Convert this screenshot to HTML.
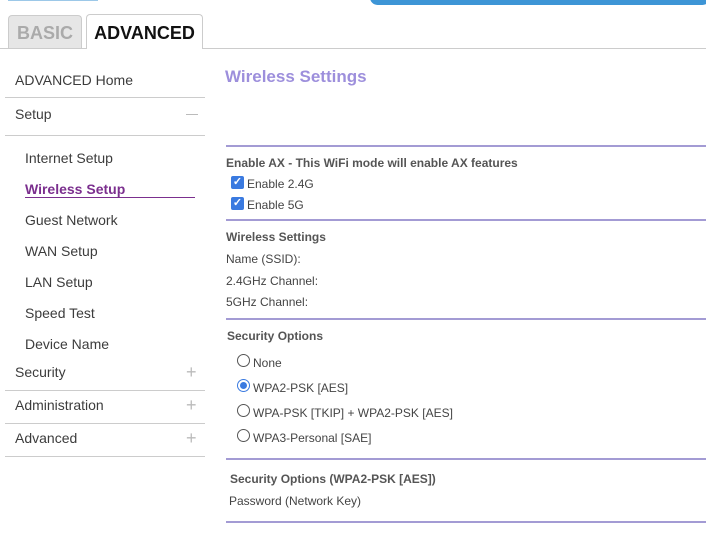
<!DOCTYPE html><html><head><style>
*{margin:0;padding:0;box-sizing:border-box}
body{width:706px;height:544px;background:#fff;position:relative;overflow:hidden;font-family:"Liberation Sans",Arial,sans-serif;color:#333}
.a{position:absolute;white-space:nowrap;line-height:16px}
.s{font-size:14px;color:#3c3c3c}
.m{font-size:12px;color:#444}
.b{font-weight:bold;color:#555}
.h{position:absolute;height:1px;background:#ccc}
.p{position:absolute;left:226px;width:480px;height:2px;background:#a39bd4}
.pl{position:absolute;font-size:18px;color:#bbb;line-height:16px}
.cb{position:absolute;width:13px;height:13px;background:#3a7ae0;border-radius:2px;color:#fff;font-size:11px;line-height:13px;text-align:center;font-weight:bold}
.r{position:absolute;width:13px;height:13px;border:1px solid #555;border-radius:50%}
</style></head><body>
<div style="position:absolute;left:370px;top:-10px;width:340px;height:15px;background:#3d95d6;border-radius:8px"></div>
<div style="position:absolute;left:8px;top:-2px;width:90px;height:3px;background:#9cc8e8"></div>
<div style="position:absolute;left:8px;top:15px;width:74px;height:34px;background:#e6e6e6;border:1px solid #ccc;border-bottom:none;border-radius:4px 4px 0 0;font-weight:bold;font-size:18px;color:#aaa;text-align:center;line-height:34px">BASIC</div>
<div style="position:absolute;left:86px;top:14px;width:117px;height:35px;background:#fff;border:1px solid #ccc;border-bottom:none;border-radius:4px 4px 0 0;font-weight:bold;font-size:18px;color:#111;text-align:center;line-height:36px">ADVANCED</div>
<div class="h" style="left:0;top:48px;width:86px"></div>
<div class="h" style="left:203px;top:48px;width:503px"></div>

<div class="a s" style="left:15px;top:72px">ADVANCED Home</div>
<div class="h" style="left:5px;top:97px;width:200px"></div>
<div class="a s" style="left:15px;top:106px">Setup</div>
<div style="position:absolute;left:186px;top:114px;width:12px;height:1px;background:#bbb"></div>
<div class="h" style="left:5px;top:135px;width:200px"></div>
<div class="a s" style="left:25px;top:150px">Internet Setup</div>
<div class="a s" style="left:25px;top:181px;color:#7b2f8e;font-weight:bold">Wireless Setup</div>
<div style="position:absolute;left:25px;top:197px;width:170px;height:1px;background:#7b2f8e"></div>
<div class="a s" style="left:25px;top:212px">Guest Network</div>
<div class="a s" style="left:25px;top:243px">WAN Setup</div>
<div class="a s" style="left:25px;top:274px">LAN Setup</div>
<div class="a s" style="left:25px;top:305px">Speed Test</div>
<div class="a s" style="left:25px;top:336px">Device Name</div>
<div class="a s" style="left:15px;top:364px">Security</div>
<div class="pl" style="left:186px;top:364px">+</div>
<div class="h" style="left:5px;top:390px;width:200px"></div>
<div class="a s" style="left:15px;top:397px">Administration</div>
<div class="pl" style="left:186px;top:397px">+</div>
<div class="h" style="left:5px;top:423px;width:200px"></div>
<div class="a s" style="left:15px;top:430px">Advanced</div>
<div class="pl" style="left:186px;top:430px">+</div>
<div class="h" style="left:5px;top:456px;width:200px"></div>

<div class="a" style="left:225px;top:68px;font-size:17px;line-height:18px;font-weight:bold;color:#9d8fdc">Wireless Settings</div>
<div class="p" style="top:145px"></div>
<div class="a m b" style="left:226px;top:155px">Enable AX - This WiFi mode will enable AX features</div>
<div class="cb" style="left:231px;top:176px">✓</div><div class="a m" style="left:247px;top:176px">Enable 2.4G</div>
<div class="cb" style="left:231px;top:197px">✓</div><div class="a m" style="left:247px;top:197px">Enable 5G</div>
<div class="p" style="top:219px"></div>
<div class="a m b" style="left:226px;top:229px">Wireless Settings</div>
<div class="a m" style="left:226px;top:251px">Name (SSID):</div>
<div class="a m" style="left:226px;top:273px">2.4GHz Channel:</div>
<div class="a m" style="left:226px;top:294px">5GHz Channel:</div>
<div class="p" style="top:318px"></div>
<div class="a m b" style="left:227px;top:328px">Security Options</div>
<div class="r" style="left:237px;top:354px"></div><div class="a m" style="left:253px;top:355px">None</div>
<div class="r" style="left:237px;top:379px;border-color:#3a7ae0"><div style="position:absolute;left:2px;top:2px;width:7px;height:7px;border-radius:50%;background:#3a7ae0"></div></div><div class="a m" style="left:253px;top:380px">WPA2-PSK [AES]</div>
<div class="r" style="left:237px;top:404px"></div><div class="a m" style="left:253px;top:405px">WPA-PSK [TKIP] + WPA2-PSK [AES]</div>
<div class="r" style="left:237px;top:429px"></div><div class="a m" style="left:253px;top:430px">WPA3-Personal [SAE]</div>
<div class="p" style="top:458px"></div>
<div class="a m b" style="left:230px;top:471px">Security Options (WPA2-PSK [AES])</div>
<div class="a m" style="left:229px;top:493px">Password (Network Key)</div>
<div class="p" style="top:521px"></div>
</body></html>
